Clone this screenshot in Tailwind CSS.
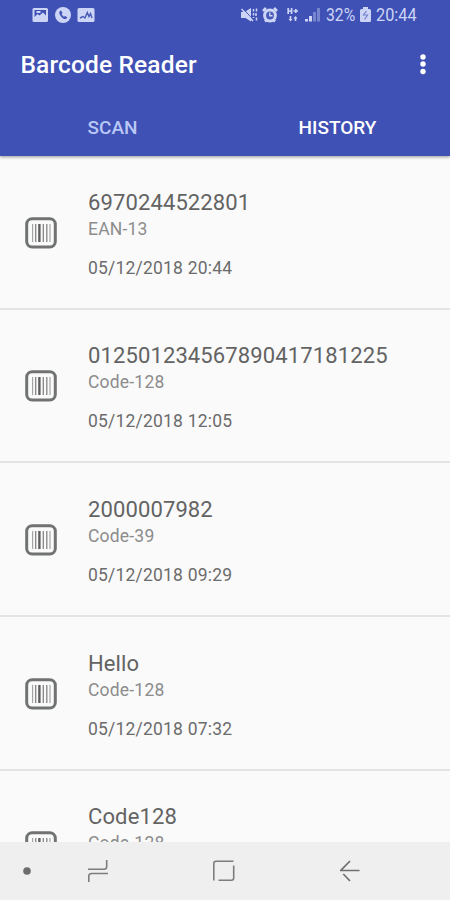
<!DOCTYPE html>
<html lang="en">
<head>
<meta charset="utf-8">
<meta name="viewport" content="width=device-width, initial-scale=1">
<title>Barcode Reader</title>
<script src="https://cdn.jsdelivr.net/npm/@tailwindcss/browser@4"></script>
</head>
<body class="bg-[#fafafa] font-['Roboto',sans-serif]">
<svg class="hidden">
  <symbol id="barcode" viewBox="0 0 32 32">
    <rect x="1.7" y="1.7" width="28.6" height="28.4" rx="5.5" fill="none" stroke="#707372" stroke-width="3"/>
    <path d="M7.6 7v18M25 7v18" stroke="#a5a5a5" stroke-width="1.2"/>
    <path d="M10.7 7v18M18.3 7v18M21.8 7v18" stroke="#858585" stroke-width="1.3"/>
    <path d="M14.4 7v18" stroke="#5f5f5f" stroke-width="2.4"/>
  </symbol>
</svg>
<div class="flex h-[900px] w-[450px] flex-col overflow-hidden">
  <header class="z-10 flex h-[155.5px] shrink-0 flex-col bg-[#3f51b5] shadow-[0_1px_3px_rgba(0,0,0,0.4)]">
    <div class="flex h-[30px] items-center pl-8 pr-[33px] text-[#cdd5f6]">
      <div class="flex gap-[6px]">
        <svg width="17" height="16" viewBox="0 0 17 16"><path fill-rule="evenodd" d="M2 1h12.500q1.500 0 1.500 1.500v11q0 1.500-1.500 1.500H2Q.5 15 .5 13.500v-11Q.5 1 2 1zM2.500 3v7l3-3 2 1.500 3.500-3 3 3V3z" fill="currentColor"/><path d="M4.500 4h4v2h-4z" fill="currentColor"/></svg>
        <svg width="16" height="16" viewBox="0 0 16 16"><circle cx="8" cy="8" r="8" fill="currentColor"/><path d="M5 4c-1.2 1-.8 3.2 1 5.4s4 3.2 5.500 2.200l.8-1-2-1.700-1.300.8C7.900 9.100 7 8 6.600 7l1-1.100L6 3.500z" fill="#3f51b5"/></svg>
        <svg width="18" height="16" viewBox="0 0 18 16"><rect x=".5" y="1" width="17" height="14" rx="1.500" fill="currentColor"/><path d="M3 11l3-1.500 2 1.500 2.300-5.500 1.700 4 1.500-3L15 11" fill="none" stroke="#4a5ab9" stroke-width="1.400"/></svg>
      </div>
      <div class="ml-auto flex items-center">
        <svg class="mr-[4px]" width="17" height="16" viewBox="0 0 17 16"><path d="M0 5h3.500L10 1v13.500L4.500 11H0z" fill="currentColor"/><path d="M2 1.500l10 11" stroke="#3f51b5" stroke-width="1"/><path d="M.5 2L12 14" stroke="currentColor" stroke-width="1.500"/><path d="M12.500 2v2.500M12.500 6v2.500M12.500 10v1M15.500 1.500v3M15 6v3M15.500 10.500v3" fill="none" stroke="currentColor" stroke-width="1.500"/></svg>
        <svg class="mr-[9px]" width="16" height="16" viewBox="0 0 16 16"><circle cx="8" cy="8.500" r="6.900" fill="currentColor"/><path d="M1 4l3-3M15 4l-3-3M3 14.500l2-2M13 14.500l-2-2" stroke="currentColor" stroke-width="2.600"/><circle cx="8" cy="8.500" r="3.900" fill="#4859b8"/><path d="M7.800 5.500v3.300h2.700" fill="none" stroke="currentColor" stroke-width="1.400"/></svg>
        <svg class="mr-[6px]" width="12" height="16" viewBox="0 0 12 16"><path d="M1.200 1v6M4.600 1v6M1 4h4M6.500 4h4.500M8.800 2v4" stroke="currentColor" stroke-width="1.700"/><path d="M3.500 9v4M8.500 10v4" stroke="currentColor" stroke-width="1.700"/><path d="M1.500 12h4l-2 2.500zM6.500 11.500h4l-2-2.500z" fill="currentColor"/></svg>
        <svg class="mr-[6px]" width="15" height="16" viewBox="0 0 15 16"><path d="M0 12h3v2.500H0zM4 9h3v5.500H4z" fill="currentColor"/><path d="M8 5h3v9.500H8zM12 1h3v13.500h-3z" fill="currentColor" opacity=".4"/></svg>
        <span class="mr-[5px] w-[29px] origin-left scale-x-[0.85] whitespace-nowrap pt-[2px] text-[18.500px]">32%</span>
        <svg class="mr-[5px]" width="11" height="16" viewBox="0 0 11 16"><path d="M3 0h5v2h1.500q1.500 0 1.500 1.500V14q0 1-1.500 1h-8Q0 15 0 14V3.500Q0 2 1.500 2H3z" fill="currentColor"/><path d="M6.500 4L3.500 8h4l-3 4.500" fill="none" stroke="#7582cc" stroke-width="1.200"/></svg>
        <span class="w-[41px] origin-left scale-x-[0.88] whitespace-nowrap pt-[2px] text-[18.500px]">20:44</span>
      </div>
    </div>
    <div class="flex h-[69px] items-center pl-[20.500px] pr-[24px] text-white">
      <h1 class="whitespace-nowrap pt-[2px] text-[24.500px] font-medium tracking-[0.150px]">Barcode Reader</h1>
      <svg class="ml-auto" width="6" height="22" viewBox="0 0 6 22"><g fill="currentColor"><circle cx="3" cy="3" r="2.700"/><circle cx="3" cy="10" r="2.700"/><circle cx="3" cy="17.500" r="2.700"/></g></svg>
    </div>
    <nav class="grid h-[56px] grid-cols-2 items-center pt-[2px] text-center text-[19px] font-medium">
      <span class="text-[#b9c7f5]">SCAN</span>
      <span class="text-white">HISTORY</span>
    </nav>
  </header>
  <main id="list" class="min-h-0 flex-1 overflow-hidden pt-[0.500px]"></main>
  <footer class="flex h-[58px] shrink-0 items-center bg-[#efefef] pl-[23px] text-[#6d6d6d]">
    <svg width="8" height="8" viewBox="0 0 8 8"><circle cx="4" cy="4" r="3.800" fill="currentColor"/></svg>
    <svg class="ml-[57px]" width="20" height="22" viewBox="0 0 20 22" fill="none" stroke="#7d7d7d" stroke-width="1.600"><path d="M0 9.300h16q2.700 0 2.700-2.700V0M20 13.500H3.500Q.8 13.500.8 16.200V22"/></svg>
    <svg class="ml-[105px]" width="22" height="22" viewBox="0 0 22 22" fill="none" stroke="#7d7d7d" stroke-width="1.600"><path d="M.8 20.500V3.500Q.8 1.200 3 1.200H20.500M20.700 5.500v12.500q0 2.200-2.200 2.200H5.500"/></svg>
    <svg class="ml-[105px]" width="20" height="22" viewBox="0 0 20 22" fill="none" stroke="#707070" stroke-width="1.700"><path d="M10 1L.8 10.500H19.500M3.300 14L10 21"/></svg>
  </footer>
</div>
<template id="row">
  <article class="flex h-[153.670px] items-center border-b-2 border-[#e4e4e4] pl-[25px] pt-[2px]">
    <svg class="w-8 shrink-0" height="32"><use href="#barcode"/></svg>
    <div class="ml-[31px] whitespace-nowrap pt-[1px]">
      <h2 class="text-[22px] leading-[30px] tracking-[0.120px] text-[#636363]"></h2>
      <p class="text-[17.500px] leading-[22px] tracking-[0.200px] text-[#8c8c8c]"></p>
      <time class="mt-[17px] block text-[17.500px] leading-[22px] tracking-[0.200px] text-[#6c6c6c]"></time>
    </div>
  </article>
</template>
<script>
const scans = [
  ['6970244522801', 'EAN-13', '05/12/2018 20:44'],
  ['012501234567890417181225', 'Code-128', '05/12/2018 12:05'],
  ['2000007982', 'Code-39', '05/12/2018 09:29'],
  ['Hello', 'Code-128', '05/12/2018 07:32'],
  ['Code128', 'Code-128', '']
];
const list = document.getElementById('list');
for (const [value, format, date] of scans) {
  const row = document.getElementById('row').content.cloneNode(true);
  row.querySelector('h2').textContent = value;
  row.querySelector('p').textContent = format;
  row.querySelector('time').textContent = date || '\u00a0';
  list.append(row);
}
</script>
</body>
</html>
